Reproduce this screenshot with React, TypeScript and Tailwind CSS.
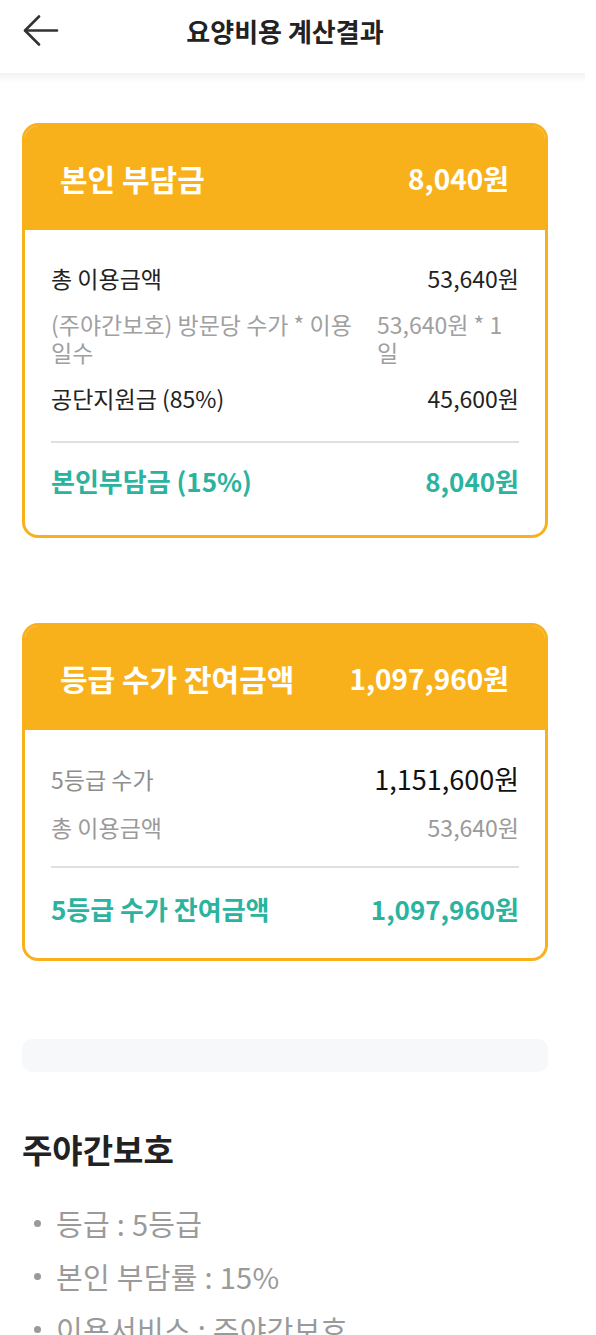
import type { ReactNode } from 'react';

function BackArrow() {
  return (
    <svg width="36" height="32" viewBox="0 0 36 32" fill="none" stroke="#333" strokeWidth="2.6" strokeLinecap="round" strokeLinejoin="round">
      <path d="M34 15.5H2.5" />
      <path d="M16 1.5L2 15.5L16 29.5" />
    </svg>
  );
}

function Card({ title, amount, children }: { title: string; amount: string; children: ReactNode }) {
  return (
    <div className="w-[526px] rounded-[16px] border-[3px] border-[#F9B11B] overflow-hidden bg-white">
      <div className="h-[104px] bg-[#F9B11B] flex items-center justify-between pl-[35px] pr-[36px] text-white font-bold">
        <span className="text-[30px]">{title}</span>
        <span className="text-[28px]">{amount}</span>
      </div>
      {children}
    </div>
  );
}

export default function App() {
  return (
    <div className="w-[596px] h-[1335px] overflow-hidden bg-white font-['Noto_Sans_CJK_KR','Noto_Sans',sans-serif] text-[#222]">
      {/* Top bar */}
      <div className="w-[585px] h-[73px] flex items-start">
        <div className="w-[72px] pl-[23px] pt-[15px]">
          <BackArrow />
        </div>
        <div className="flex-1 pt-[16px] text-center text-[26px] leading-[30px] font-semibold text-[#222]">
          요양비용 계산결과
        </div>
        <div className="w-[87px]" />
      </div>
      <div className="w-[585px] h-[10px] bg-linear-to-b from-[#f3f3f3] to-white" />

      <div className="px-[22px] pt-[40px] flex flex-col">
        {/* 본인 부담금 */}
        <Card title="본인 부담금" amount="8,040원">
          <div className="px-[26px] pt-[34px] pb-[37px]">
            <div className="flex flex-col gap-[18px] text-[23px] leading-[28px]">
              <div className="flex justify-between">
                <span>총 이용금액</span>
                <span>53,640원</span>
              </div>
              <div className="flex gap-[14px] text-[#a0a0a0]">
                <span className="flex-1">(주야간보호) 방문당 수가 * 이용일수</span>
                <span className="w-[142px] pr-[10px]">53,640원 * 1일</span>
              </div>
              <div className="flex justify-between">
                <span>공단지원금 (85%)</span>
                <span>45,600원</span>
              </div>
            </div>
            <div className="h-[2px] bg-[#e0e0e0] mt-[29px] mb-[21px]" />
            <div className="flex justify-between text-[26px] leading-[34px] font-bold text-[#2AB39E]">
              <span>본인부담금 (15%)</span>
              <span>8,040원</span>
            </div>
          </div>
        </Card>

        {/* 등급 수가 잔여금액 */}
        <div className="mt-[85px]">
          <Card title="등급 수가 잔여금액" amount="1,097,960원">
            <div className="px-[26px] pt-[34px] pb-[32px]">
              <div className="flex justify-between items-center h-[30px]">
                <span className="text-[23px] text-[#8e8e8e]">5등급 수가</span>
                <span className="text-[27px] text-[#111]">1,151,600원</span>
              </div>
              <div className="flex justify-between mt-[19px] text-[23px] leading-[28px] text-[#9a9a9a]">
                <span>총 이용금액</span>
                <span>53,640원</span>
              </div>
              <div className="h-[2px] bg-[#e0e0e0] mt-[25px] mb-[24px]" />
              <div className="flex justify-between text-[26px] leading-[34px] font-bold text-[#2AB39E]">
                <span>5등급 수가 잔여금액</span>
                <span>1,097,960원</span>
              </div>
            </div>
          </Card>
        </div>

        <div className="mt-[78px] w-[526px] h-[33px] rounded-[10px] bg-[#f7f8fa]" />

        {/* 서비스 정보 */}
        <h2 className="mt-[57px] text-[33px] leading-[40px] font-bold text-[#222]">주야간보호</h2>
        <ul className="mt-[28px] text-[29px] leading-[53px] tracking-[0.3px] text-[#9a9a9a]">
          {['등급 : 5등급', '본인 부담률 : 15%', '이용서비스 : 주야간보호'].map((item) => (
            <li key={item} className="flex items-center">
              <span className="ml-[12px] mr-[15px] w-[7px] h-[7px] rounded-full bg-[#9a9a9a]" />
              <span>{item}</span>
            </li>
          ))}
        </ul>
      </div>
    </div>
  );
}
